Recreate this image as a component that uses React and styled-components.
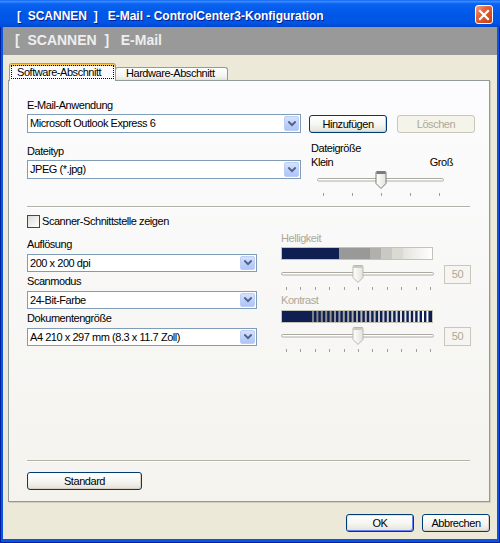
import React from 'react';
import styled, { createGlobalStyle } from 'styled-components';

const GlobalStyle = createGlobalStyle`
  html, body { margin: 0; padding: 0; background: #ffffff; }
  body { font-family: "Liberation Sans", Arial, sans-serif; font-size: 11px; }
  *, *::before, *::after { box-sizing: border-box; }
`;

const Window = styled.div`
  width: 500px;
  height: 543px;
  display: flex;
  flex-direction: column;
  background: #0A54E4;
  box-shadow: inset 1px 0 0 #00209C, inset -1px 0 0 #00209C, inset 0 -1px 0 #00209C;
  font-family: "Liberation Sans", Arial, sans-serif;
  font-size: 11px;
  letter-spacing: -0.45px;
  color: #000;
  overflow: hidden;
`;

const TitleBar = styled.div`
  height: 27px;
  flex: none;
  display: flex;
  align-items: flex-start;
  justify-content: space-between;
  padding: 0 7px 0 17px;
  background: linear-gradient(#0A5FEE 0%, #3C8FFF 5%, #0B62F0 14%, #0058E8 50%, #0055E4 85%, #0046CE 100%);
`;

const TitleText = styled.div`
  padding-top: 9px;
  line-height: 14px;
  font-size: 12px;
  font-weight: bold;
  color: #ffffff;
  white-space: pre;
  letter-spacing: 0;
  text-shadow: 1px 1px 0 #0A1E8C;
`;

const CloseButton = styled.div`
  margin-top: 5px;
  width: 18px;
  height: 19px;
  border: 1px solid #ffffff;
  border-radius: 3px;
  background: linear-gradient(135deg, #F4A488 0%, #E5653D 35%, #D14A1F 75%, #C23E16 100%);
  display: flex;
  align-items: center;
  justify-content: center;
`;

const Frame = styled.div`
  flex: 1;
  display: flex;
  flex-direction: column;
  margin: 0 3px 4px;
  background: #ECE9D8;
`;

const Banner = styled.div`
  height: 28px;
  flex: none;
  background: #999999;
  padding: 5px 0 0 12px;
  font-size: 14px;
  font-weight: bold;
  line-height: 16px;
  color: #EEEEEE;
  white-space: pre;
  letter-spacing: 0;
`;

const Content = styled.div`
  flex: 1;
  display: flex;
  flex-direction: column;
  padding: 8px 7px 7px 5px;
`;

const TabRow = styled.div`
  display: flex;
  align-items: flex-end;
  height: 17px;
  flex: none;
  padding-left: 1px;
  position: relative;
  z-index: 1;
`;

const Tab = styled.div`
  width: ${p => p.$w}px;
  height: ${p => (p.$active ? 18 : 13)}px;
  margin-bottom: ${p => (p.$active ? -1 : 0)}px;
  margin-left: ${p => (p.$active ? 0 : -1)}px;
  position: relative;
  z-index: ${p => (p.$active ? 2 : 1)};
  border: 1px solid #919B9C;
  border-bottom: none;
  border-radius: 3px 3px 0 0;
  ${p => p.$active
    ? `border-top: 1px solid #E68B2C;
       box-shadow: inset 0 2px 0 #FFC83C;
       background: #FCFCFE;
       padding: 1px 0 0 1px;`
    : `background: linear-gradient(#FFFFFF, #F3F3EF 70%, #E3E2DA);
       padding: 0 0 0 10px;
       line-height: 11px;`}
`;

const FocusRect = styled.span`
  display: block;
  width: 103px;
  height: 14px;
  border: 1px dotted #000;
  padding-left: 5px;
  line-height: 12px;
`;

const TabPanel = styled.div`
  height: 422px;
  flex: none;
  border: 1px solid #919B9C;
  background: linear-gradient(#FCFCFE, #F4F3EE);
  box-shadow: 1px 1px 0 #D0CEBF;
  display: flex;
  flex-direction: column;
  padding: 18px 17px 11px 18px;
`;

const TopGrid = styled.div`
  display: grid;
  grid-template-columns: 274px 1fr;
  column-gap: 8px;
  row-gap: 12px;
`;

const Field = styled.div`
  display: flex;
  flex-direction: column;
`;

const Label = styled.div`
  line-height: 13px;
  height: 13px;
  margin-bottom: ${p => p.$mb ?? 2}px;
  color: ${p => (p.$disabled ? '#ACA899' : '#000')};
  white-space: nowrap;
`;

const Combo = styled.div`
  width: ${p => p.$w}px;
  height: ${p => p.$h}px;
  border: 1px solid #7F9DB9;
  background: #ffffff;
  display: flex;
  align-items: center;
  justify-content: space-between;
  padding: 0 1px 0 2px;
`;

const ComboText = styled.span`
  line-height: 13px;
  white-space: nowrap;
`;

const ComboButton = styled.span`
  width: 15px;
  height: calc(100% - 2px);
  border: 1px solid #BCCDF6;
  border-radius: 2px;
  background: linear-gradient(#D6E2FD, #BACEFA 60%, #AFC5F7);
  display: flex;
  align-items: center;
  justify-content: center;
`;

const ButtonRow = styled.div`
  display: flex;
  gap: 10px;
  padding-top: 16px;
`;

const Button = styled.button`
  width: ${p => p.$w}px;
  height: 18px;
  padding: 0;
  margin: 0;
  font-family: "Liberation Sans", Arial, sans-serif;
  font-size: 11px;
  letter-spacing: -0.45px;
  line-height: 13px;
  border-radius: 3px;
  border: 1px solid ${p => (p.disabled ? '#C9C7BA' : '#003C74')};
  color: ${p => (p.disabled ? '#ACA899' : '#000')};
  background: ${p => (p.disabled ? '#F5F4EA' : 'linear-gradient(#FFFFFF, #F5F5F1 55%, #E3E1D8)')};
  box-shadow: ${p => (p.$default
    ? 'inset 1px 1px 0 #CEE7FF, inset -1px -1px 0 #6982EE'
    : p.disabled ? 'none' : 'inset -1px -1px 0 #D6D0C5')};
  flex: none;
`;

const SizeBlock = styled.div`
  margin-top: -4px;
  padding-left: 2px;
  display: flex;
  flex-direction: column;
`;

const TextLine = styled.div`
  width: 142px;
  line-height: 14px;
  height: 14px;
  display: flex;
  justify-content: space-between;
`;

const SliderSvg = styled.svg`
  display: block;
  flex: none;
  margin-top: ${p => p.$mt || 0}px;
  margin-left: ${p => p.$ml || 0}px;
`;

const Separator = styled.div`
  height: 2px;
  flex: none;
  border-top: 1px solid #B3B1A6;
  border-bottom: 1px solid #FFFFFF;
  margin-right: 2px;
  margin-top: ${p => p.$mt || 0}px;
`;

const CheckRow = styled.div`
  display: flex;
  align-items: center;
  gap: 2px;
  height: 13px;
  margin-top: 7px;
  line-height: 13px;
`;

const CheckBox = styled.span`
  width: 13px;
  height: 13px;
  flex: none;
  border: 1px solid #1C5180;
  background: linear-gradient(135deg, #DCDCD7, #FFFFFF);
`;

const MidGrid = styled.div`
  display: grid;
  grid-template-columns: 230px 1fr;
  column-gap: 24px;
  margin-top: 10px;
`;

const FieldStack = styled.div`
  display: flex;
  flex-direction: column;
  gap: 3px;
`;

const AdjustColumn = styled.div`
  margin-top: -6px;
  display: flex;
  flex-direction: column;
`;

const BarSvg = styled.svg`
  display: block;
  margin-bottom: ${p => p.$mb || 0}px;
`;

const SliderRow = styled.div`
  display: flex;
  gap: 10px;
  align-items: flex-start;
  margin-bottom: ${p => p.$mb || 0}px;
`;

const ValueBox = styled.div`
  width: 27px;
  height: 19px;
  margin-top: 1px;
  border: 1px solid #C9C7BA;
  background: #F6F5F1;
  color: #ACA899;
  display: flex;
  align-items: center;
  justify-content: center;
  line-height: 13px;
`;

const Spacer = styled.div`
  flex: 1;
`;

const StandardWrap = styled.div`
  margin-top: 10px;
`;

const Footer = styled.div`
  display: flex;
  justify-content: flex-end;
  gap: 8px;
  margin-top: 12px;
`;

function Chevron() {
  return (
    <svg width="8" height="6" viewBox="0 0 8 6">
      <path d="M1 1.2 L4 4.2 L7 1.2" fill="none" stroke="#4D6185" strokeWidth="2" strokeLinecap="square" />
    </svg>
  );
}

function ComboBox({ w, h, children }) {
  return (
    <Combo $w={w} $h={h}>
      <ComboText>{children}</ComboText>
      <ComboButton><Chevron /></ComboButton>
    </Combo>
  );
}

function Slider({ width, ticks, thumb, disabled, id, ml, mt }) {
  const stroke = disabled ? '#B9B8B0' : '#7C7B74';
  const cap = disabled ? '#C9C8C1' : '#7A7A78';
  return (
    <SliderSvg width={width} height={28} viewBox={`0 0 ${width} 28`} $ml={ml} $mt={mt}>
      <defs>
        <linearGradient id={id} x1="0" y1="0" x2="1" y2="0">
          <stop offset="0" stopColor="#FFFFFF" />
          <stop offset="1" stopColor="#E3E2DB" />
        </linearGradient>
      </defs>
      <rect x="0.5" y="8.5" width={width - 1} height="2.5" rx="1.25" fill="#FFFFFF" stroke="#ABAAA2" />
      {ticks.map(t => (
        <rect key={t} x={t} y="23" width="1" height="3" fill="#A09F98" />
      ))}
      <g transform={`translate(${thumb - 5.5} 1)`}>
        <path d="M1.5 0.5H9.5Q10.5 0.5 10.5 1.5V12.5L5.5 17.5L0.5 12.5V1.5Q0.5 0.5 1.5 0.5Z" fill={`url(#${id})`} stroke={stroke} />
        <rect x="1" y="1" width="9" height="2" fill={cap} />
      </g>
    </SliderSvg>
  );
}

function BrightnessBar() {
  return (
    <BarSvg width="152" height="13" viewBox="0 0 152 13" $mb={4}>
      <defs>
        <linearGradient id="bfade" x1="0" y1="0" x2="1" y2="0">
          <stop offset="0" stopColor="#E4E3DE" />
          <stop offset="1" stopColor="#FFFFFF" />
        </linearGradient>
      </defs>
      <rect x="0.5" y="0.5" width="151" height="12" fill="#FFFFFF" stroke="#C5C3B8" />
      <rect x="1" y="1" width="57" height="11" fill="#0F1F52" />
      <rect x="58" y="1" width="31" height="11" fill="#999999" />
      <rect x="89" y="1" width="11" height="11" fill="#B1B0AD" />
      <rect x="100" y="1" width="11" height="11" fill="#C9C8C4" />
      <rect x="111" y="1" width="11" height="11" fill="#DAD9D2" />
      <rect x="122" y="1" width="29" height="11" fill="url(#bfade)" />
    </BarSvg>
  );
}

function ContrastBar() {
  const stripes = Array.from({ length: 27 }, (_, i) => {
    const g = Math.round(0x80 + (0xff - 0x80) * (i / 26));
    return { x: 31 + i * 4.4, c: `rgb(${g},${g},${g})` };
  });
  return (
    <BarSvg width="152" height="13" viewBox="0 0 152 13" $mb={3}>
      <rect x="0.5" y="0.5" width="151" height="12" fill="#0F1F52" stroke="#C5C3B8" />
      {stripes.map(s => (
        <rect key={s.x} x={s.x} y="1" width="2" height="11" fill={s.c} />
      ))}
    </BarSvg>
  );
}

const bigTicks = [5, 19, 34, 48, 63, 77, 91, 106, 120, 135, 149];

export default function App() {
  return (
    <>
      <GlobalStyle />
      <Window>
        <TitleBar>
          <TitleText>{'[  SCANNEN  ]   E-Mail - ControlCenter3-Konfiguration'}</TitleText>
          <CloseButton>
            <svg width="12" height="12" viewBox="0 0 12 12">
              <path d="M2 2 L10 10 M10 2 L2 10" stroke="#FFFFFF" strokeWidth="2.2" strokeLinecap="square" />
            </svg>
          </CloseButton>
        </TitleBar>
        <Frame>
          <Banner>{'[  SCANNEN  ]   E-Mail'}</Banner>
          <Content>
            <TabRow>
              <Tab $active $w={107}>
                <FocusRect>Software-Abschnitt</FocusRect>
              </Tab>
              <Tab $w={113}>Hardware-Abschnitt</Tab>
            </TabRow>
            <TabPanel>
              <TopGrid>
                <Field>
                  <Label>E-Mail-Anwendung</Label>
                  <ComboBox w={274} h={19}>Microsoft Outlook Express 6</ComboBox>
                </Field>
                <ButtonRow>
                  <Button $w={78}>Hinzufügen</Button>
                  <Button $w={78} disabled>Löschen</Button>
                </ButtonRow>
                <Field>
                  <Label>Dateityp</Label>
                  <ComboBox w={274} h={19}>JPEG (*.jpg)</ComboBox>
                </Field>
                <SizeBlock>
                  <TextLine>Dateigröße</TextLine>
                  <TextLine>
                    <span>Klein</span>
                    <span>Groß</span>
                  </TextLine>
                  <Slider id="tsize" width={127} ticks={[6, 35, 64, 93, 122]} thumb={64} ml={6} mt={1} />
                </SizeBlock>
              </TopGrid>

              <Separator $mt={8} />

              <CheckRow>
                <CheckBox />
                <span>Scanner-Schnittstelle zeigen</span>
              </CheckRow>

              <MidGrid>
                <FieldStack>
                  <Field>
                    <Label $mb={3}>Auflösung</Label>
                    <ComboBox w={230} h={18}>200 x 200 dpi</ComboBox>
                  </Field>
                  <Field>
                    <Label $mb={3}>Scanmodus</Label>
                    <ComboBox w={230} h={18}>24-Bit-Farbe</ComboBox>
                  </Field>
                  <Field>
                    <Label $mb={3}>Dokumentengröße</Label>
                    <ComboBox w={230} h={18}>A4 210 x 297 mm (8.3 x 11.7 Zoll)</ComboBox>
                  </Field>
                </FieldStack>
                <AdjustColumn>
                  <Label $disabled>Helligkeit</Label>
                  <BrightnessBar />
                  <SliderRow $mb={2}>
                    <Slider id="tbright" width={153} ticks={bigTicks} thumb={77} disabled />
                    <ValueBox>50</ValueBox>
                  </SliderRow>
                  <Label $disabled $mb={3}>Kontrast</Label>
                  <ContrastBar />
                  <SliderRow>
                    <Slider id="tcontrast" width={153} ticks={bigTicks} thumb={77} disabled />
                    <ValueBox>50</ValueBox>
                  </SliderRow>
                </AdjustColumn>
              </MidGrid>

              <Spacer />
              <Separator />
              <StandardWrap>
                <Button $w={115}>Standard</Button>
              </StandardWrap>
            </TabPanel>
            <Footer>
              <Button $w={68} $default>OK</Button>
              <Button $w={68}>Abbrechen</Button>
            </Footer>
          </Content>
        </Frame>
      </Window>
    </>
  );
}
